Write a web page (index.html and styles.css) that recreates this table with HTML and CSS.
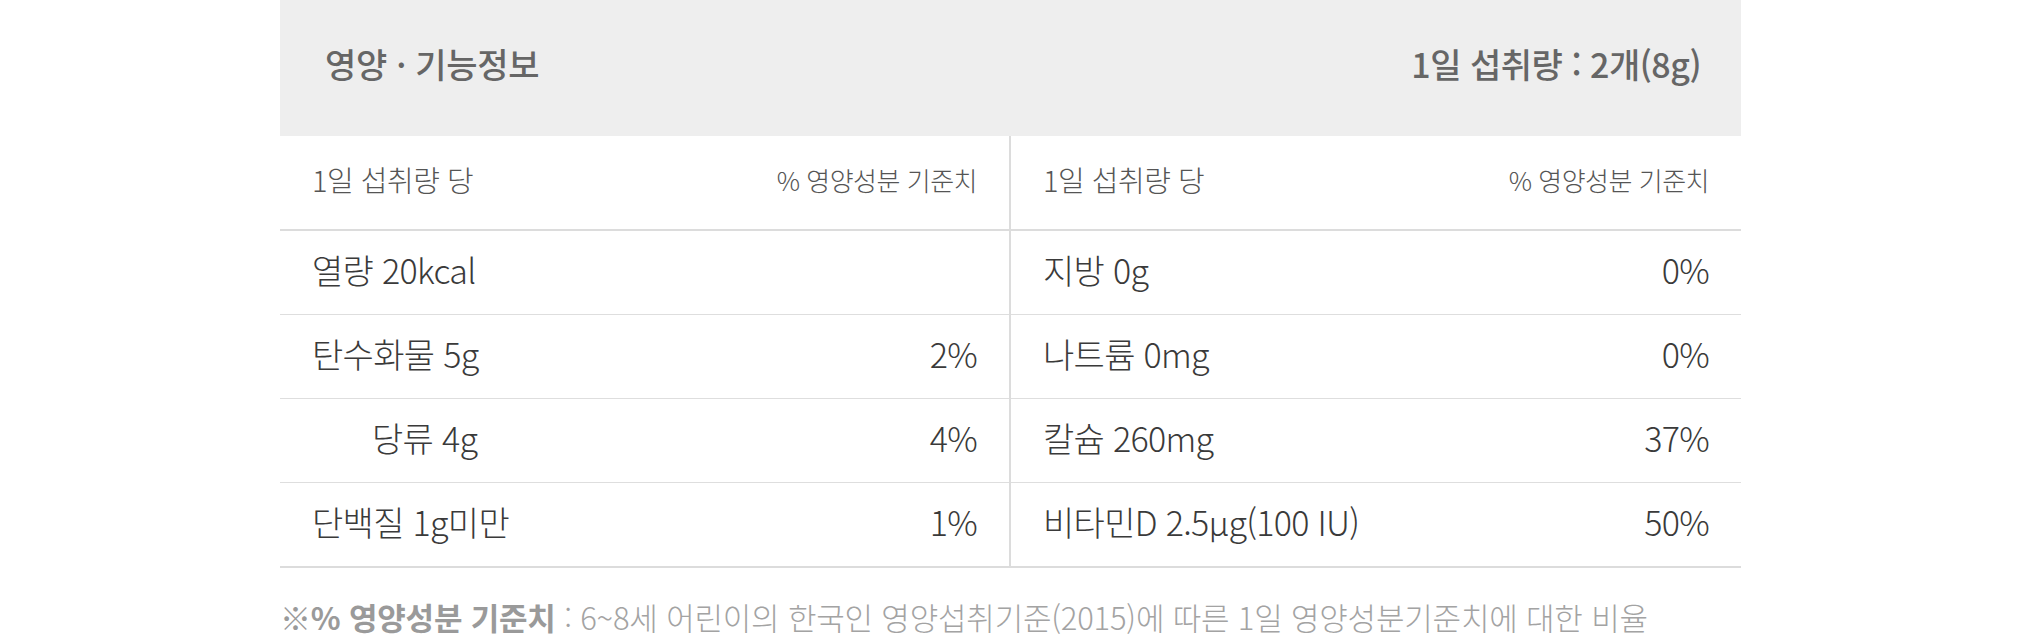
FILE: index.html
```html
<!DOCTYPE html>
<html lang="ko">
<head>
<meta charset="utf-8">
<title>영양·기능정보</title>
<link rel="stylesheet" href="styles.css">
</head>
<body>
<div class="nutri">
  <div class="nutri-head">
    <h2 class="nutri-title">영양 · 기능정보</h2>
    <span class="nutri-serving">1일 섭취량 : 2개(8g)</span>
  </div>
  <div class="nutri-body">
    <div class="nutri-col">
      <div class="nutri-row nutri-row--sub"><span class="sub-left">1일 섭취량 당</span><span class="sub-right">% 영양성분 기준치</span></div>
      <div class="nutri-row"><span>열량 20kcal</span><span></span></div>
      <div class="nutri-row"><span>탄수화물 5g</span><span>2%</span></div>
      <div class="nutri-row nutri-row--indent"><span>당류 4g</span><span>4%</span></div>
      <div class="nutri-row"><span>단백질 1g미만</span><span>1%</span></div>
    </div>
    <div class="nutri-col nutri-col--right">
      <div class="nutri-row nutri-row--sub"><span class="sub-left">1일 섭취량 당</span><span class="sub-right">% 영양성분 기준치</span></div>
      <div class="nutri-row"><span>지방 0g</span><span>0%</span></div>
      <div class="nutri-row"><span>나트륨 0mg</span><span>0%</span></div>
      <div class="nutri-row"><span>칼슘 260mg</span><span>37%</span></div>
      <div class="nutri-row"><span>비타민D 2.5μg(100 IU)</span><span>50%</span></div>
    </div>
  </div>
  <p class="nutri-note"><strong>※% 영양성분 기준치</strong> : 6~8세 어린이의 한국인 영양섭취기준(2015)에 따른 1일 영양성분기준치에 대한 비율</p>
</div>
</body>
</html>
```
FILE: styles.css
```css
html, body {
  margin: 0;
  padding: 0;
  background: #fff;
}
body {
  font-family: "Noto Sans CJK KR", "Noto Sans", sans-serif;
  color: #333;
}
.nutri {
  width: 1461px;
  margin: 0 auto;
}
.nutri-head {
  height: 136px;
  background: #eeeeee;
  display: flex;
  align-items: center;
  justify-content: space-between;
  padding: 0 40px 8px 45px;
  box-sizing: border-box;
  line-height: 1;
}
.nutri-title {
  margin: 0;
  font-size: 34px;
  font-weight: 500;
  color: #666;
  letter-spacing: -0.3px;
}
.nutri-serving {
  font-size: 34px;
  font-weight: 500;
  color: #666;
  letter-spacing: -0.5px;
}
.nutri-body {
  display: grid;
  grid-template-columns: 729px 1fr;
  border-bottom: 2px solid #dcdcdc;
}
.nutri-col--right {
  border-left: 2px solid #dcdcdc;
}
.nutri-row {
  height: 84px;
  display: flex;
  align-items: center;
  justify-content: space-between;
  padding: 0 32px 6px;
  box-sizing: border-box;
  line-height: 1;
  border-top: 1px solid #dedede;
  font-size: 34px;
  font-weight: 300;
  color: #3a3a3a;
  letter-spacing: -0.7px;
}
.nutri-row:nth-child(2) {
  border-top: none;
  height: 83px;
}
.nutri-row--sub {
  height: 95px;
  border-top: none;
  border-bottom: 2px solid #dcdcdc;
  color: #555;
  letter-spacing: -0.5px;
}
.nutri-row--indent {
  padding-left: 92px;
}
.sub-left {
  font-size: 29px;
}
.sub-right {
  font-size: 26px;
}
.nutri-note {
  margin: 30px 0 0;
  font-size: 31px;
  line-height: 1.2;
  font-weight: 300;
  color: #a3a3a3;
  letter-spacing: -0.2px;
}
.nutri-note strong {
  font-weight: 700;
  color: #9a9a9a;
}
```
